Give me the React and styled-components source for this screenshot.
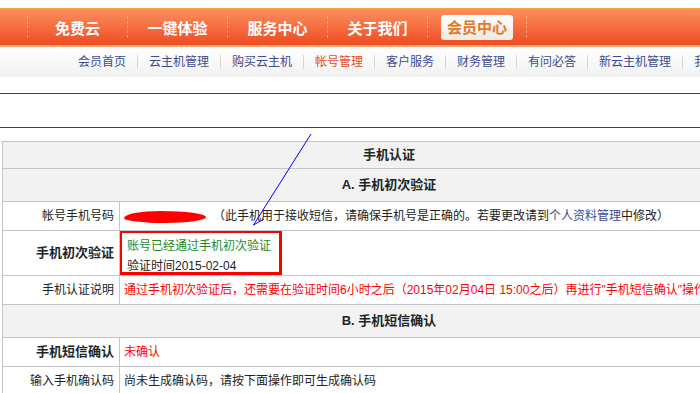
import React from 'react'
import styled, { createGlobalStyle } from 'styled-components'

const GlobalStyle = createGlobalStyle`
  html, body {
    margin: 0;
    padding: 0;
    background: #fff;
  }
  body {
    font-family: "Liberation Sans", "Noto Sans CJK SC", sans-serif;
    font-size: 12px;
    color: #222;
    overflow: hidden;
  }
`

const Page = styled.div`
  position: relative;
  width: 700px;
  height: 393px;
  overflow: hidden;
  padding-top: 8px;
  box-sizing: border-box;
`

const MainNav = styled.ul`
  display: flex;
  align-items: center;
  margin: 0;
  padding: 0 0 0 27px;
  list-style: none;
  height: 36px;
  border-top: 1px solid #f6a33e;
  border-bottom: 2px solid #fba877;
  background: linear-gradient(#fc8f5f, #ee4b21);
`

const MainItem = styled.li`
  display: flex;
  align-items: center;
  justify-content: center;
  flex: 0 0 100px;
  height: 22px;
  border-left: 1px dashed rgba(255, 196, 168, 0.55);
  box-sizing: border-box;
  color: #fff;
  font-size: 15px;
  font-weight: bold;
  &:last-child {
    border-right: 1px dashed rgba(255, 196, 168, 0.55);
  }
`

const ActiveTab = styled.span`
  display: block;
  height: 25px;
  line-height: 25px;
  padding: 0 6px;
  border-radius: 3px;
  background: linear-gradient(#ffffff, #efe8e0);
  color: #e5772a;
`

const SubNav = styled.ul`
  display: flex;
  align-items: center;
  margin: 0;
  padding: 0 0 0 78px;
  list-style: none;
  height: 30px;
  background: linear-gradient(#ffffff, #f1f1f1);
  white-space: nowrap;
`

const SubItem = styled.li`
  color: ${p => (p.$active ? '#e84a1c' : '#3c4b8f')};
  line-height: 14px;
  & + & {
    margin-left: 11px;
    padding-left: 11px;
    border-left: 1px solid #d6d6d6;
  }
`

const Banner = styled.div`
  height: 33px;
  margin-top: 16px;
  border-top: 1px solid #2d3a88;
  border-bottom: 1px solid #2d3a88;
`

const Table = styled.table`
  margin: 13px 0 0 2px;
  width: 774px;
  border-collapse: collapse;
  table-layout: fixed;
  white-space: nowrap;
`

const Cell = styled.td`
  border: 1px solid #c4c5c8;
  height: ${p => p.$h}px;
  padding: 0 5px;
  box-sizing: border-box;
  line-height: 16px;
  background: ${p => (p.$head ? '#f2f2f2' : '#fff')};
  text-align: ${p => (p.$head ? 'center' : 'left')};
  font-weight: ${p => (p.$head ? 'bold' : 'normal')};
  font-size: ${p => (p.$head ? '13px' : '12px')};
  color: ${p => (p.$head ? '#1b2626' : '#222')};
  overflow: hidden;
`

const Label = styled(Cell)`
  width: 117px;
  text-align: right;
  padding: 0 5px 0 0;
  font-weight: ${p => (p.$strong ? 'bold' : 'normal')};
  font-size: ${p => (p.$strong ? '13px' : '12px')};
  color: ${p => (p.$strong ? '#1b2626' : '#222')};
  background: #fff;
`

const Value = styled(Cell)`
  color: ${p => p.$color || '#222'};
  padding: ${p => (p.$flush ? '0' : '0 5px 0 4px')};
`

const Scribble = styled.span`
  display: inline-block;
  vertical-align: middle;
  width: 82px;
  height: 12px;
  margin-right: 7px;
  background: #ff0000;
  border-radius: 45% 55% 50% 50% / 60% 50% 50% 40%;
`

const InfoLink = styled.span`
  color: #3c4b8f;
`

const Highlight = styled.div`
  width: 163px;
  height: 45px;
  margin: -1px 0 0 -1px;
  padding: 3px 0 0 5px;
  box-sizing: border-box;
  border: 3px solid #ff0000;
  line-height: 20px;
`

const Passed = styled.div`
  color: #1d8a1d;
`

const Arrow = styled.svg`
  position: absolute;
  left: 0;
  top: 0;
  pointer-events: none;
`

export default function App() {
  const tabs = ['免费云', '一键体验', '服务中心', '关于我们']
  const links = ['会员首页', '云主机管理', '购买云主机', '帐号管理', '客户服务', '财务管理', '有问必答', '新云主机管理', '我的']
  return (
    <Page>
      <GlobalStyle />
      <MainNav>
        {tabs.map(t => (
          <MainItem key={t}>{t}</MainItem>
        ))}
        <MainItem>
          <ActiveTab>会员中心</ActiveTab>
        </MainItem>
      </MainNav>
      <SubNav>
        {links.map(l => (
          <SubItem key={l} $active={l === '帐号管理'}>{l}</SubItem>
        ))}
      </SubNav>
      <Banner />
      <Table>
        <colgroup>
          <col style={{ width: 117 }} />
          <col />
        </colgroup>
        <tbody>
          <tr>
            <Cell $head $h={27} colSpan={2}>手机认证</Cell>
          </tr>
          <tr>
            <Cell $head $h={33} colSpan={2}>A. 手机初次验证</Cell>
          </tr>
          <tr>
            <Label $h={29}>帐号手机号码</Label>
            <Value $h={29}>
              <Scribble />
              （此手机用于接收短信，请确保手机号是正确的。若要更改请到<InfoLink>个人资料管理</InfoLink>中修改）
            </Value>
          </tr>
          <tr>
            <Label $h={45} $strong>手机初次验证</Label>
            <Value $h={45} $flush>
              <Highlight>
                <Passed>账号已经通过手机初次验证</Passed>
                <div>验证时间2015-02-04</div>
              </Highlight>
            </Value>
          </tr>
          <tr>
            <Label $h={29}>手机认证说明</Label>
            <Value $h={29} $color="#ff0000">
              通过手机初次验证后，还需要在验证时间6小时之后（2015年02月04日 15:00之后）再进行"手机短信确认"操作
            </Value>
          </tr>
          <tr>
            <Cell $head $h={33} colSpan={2}>B. 手机短信确认</Cell>
          </tr>
          <tr>
            <Label $h={29} $strong>手机短信确认</Label>
            <Value $h={29} $color="#ff0000">未确认</Value>
          </tr>
          <tr>
            <Label $h={29}>输入手机确认码</Label>
            <Value $h={29}>尚未生成确认码，请按下面操作即可生成确认码</Value>
          </tr>
        </tbody>
      </Table>
      <Arrow width="700" height="393">
        <g stroke="#0000ff" strokeWidth="1" fill="none">
          <line x1="311" y1="134" x2="253.5" y2="225" />
          <line x1="253.5" y1="225" x2="264" y2="219" />
        </g>
      </Arrow>
    </Page>
  )
}
